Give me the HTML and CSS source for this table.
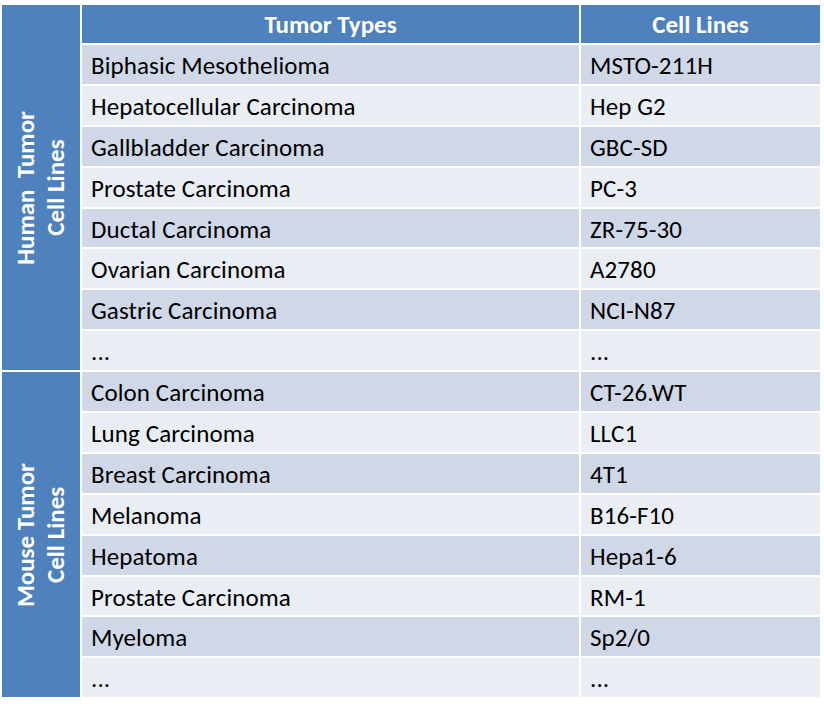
FILE: index.html
```html
<!DOCTYPE html>
<html>
<head>
<meta charset="utf-8">
<link rel="stylesheet" href="styles.css">
</head>
<body>
<div class="table">
  <div class="group group-human"><span>Human&nbsp; Tumor<br>Cell Lines</span></div>
  <div class="head">Tumor Types</div>
  <div class="head">Cell Lines</div>

  <div class="cell odd">Biphasic Mesothelioma</div><div class="cell odd">MSTO-211H</div>
  <div class="cell even">Hepatocellular Carcinoma</div><div class="cell even">Hep G2</div>
  <div class="cell odd">Gallbladder Carcinoma</div><div class="cell odd">GBC-SD</div>
  <div class="cell even">Prostate Carcinoma</div><div class="cell even">PC-3</div>
  <div class="cell odd">Ductal Carcinoma</div><div class="cell odd">ZR-75-30</div>
  <div class="cell even">Ovarian Carcinoma</div><div class="cell even">A2780</div>
  <div class="cell odd">Gastric Carcinoma</div><div class="cell odd">NCI-N87</div>
  <div class="cell even">...</div><div class="cell even">...</div>

  <div class="group group-mouse"><span>Mouse Tumor<br>Cell Lines</span></div>
  <div class="cell odd">Colon Carcinoma</div><div class="cell odd">CT-26.WT</div>
  <div class="cell even">Lung Carcinoma</div><div class="cell even">LLC1</div>
  <div class="cell odd">Breast Carcinoma</div><div class="cell odd">4T1</div>
  <div class="cell even">Melanoma</div><div class="cell even">B16-F10</div>
  <div class="cell odd">Hepatoma</div><div class="cell odd">Hepa1-6</div>
  <div class="cell even">Prostate Carcinoma</div><div class="cell even">RM-1</div>
  <div class="cell odd">Myeloma</div><div class="cell odd">Sp2/0</div>
  <div class="cell even">...</div><div class="cell even">...</div>
</div>
</body>
</html>
```
FILE: styles.css
```css
html, body {
  margin: 0;
  padding: 0;
  background: #ffffff;
}
body {
  padding: 5px 0 0 2px;
  font-family: Carlito, Lato, "Liberation Sans", sans-serif;
}
.table {
  display: grid;
  grid-template-columns: 78px 497px 239px;
  grid-template-rows: 38px repeat(16, 38.9px);
  gap: 2px;
  width: 818px;
}
.group {
  background: #4f81bd;
  color: #ffffff;
  font-weight: bold;
  font-size: 25px;
  display: flex;
  align-items: center;
  justify-content: center;
  grid-column: 1;
}
.group span {
  writing-mode: vertical-rl;
  transform: rotate(180deg);
  text-align: center;
  line-height: 30px;
}
.group-human { grid-row: 1 / span 9; }
.group-mouse { grid-row: 10 / span 8; }
.head {
  background: #4f81bd;
  color: #ffffff;
  font-weight: bold;
  font-size: 25px;
  display: flex;
  align-items: center;
  justify-content: center;
}
.cell {
  font-size: 25px;
  letter-spacing: 0.1px;
  color: #000000;
  display: flex;
  align-items: center;
  padding: 2px 0 0 9px;
  box-sizing: border-box;
}
.odd { background: #d0d8e8; }
.even { background: #e9edf4; }
```
